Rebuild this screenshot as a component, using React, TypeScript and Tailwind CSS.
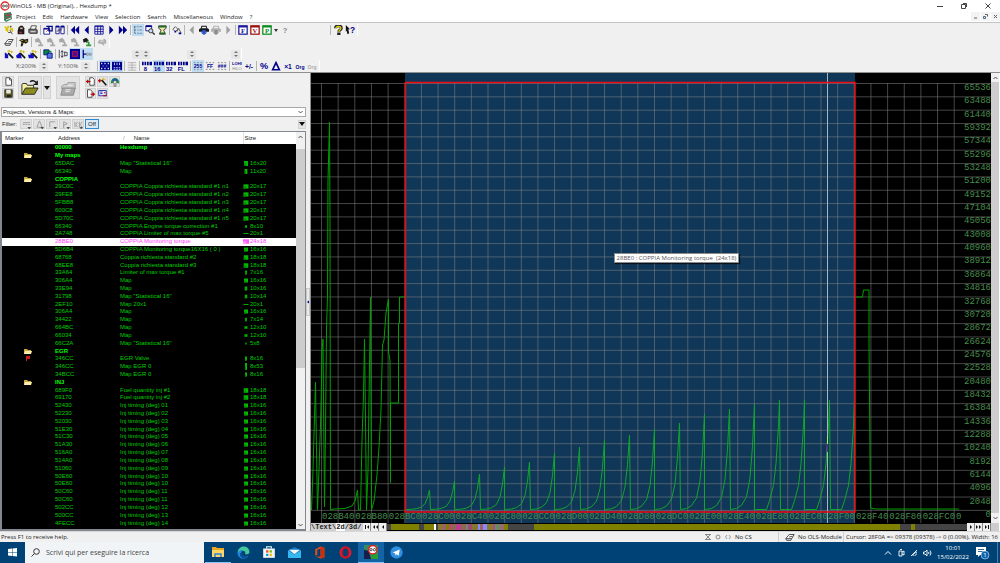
import { useState } from 'react';
import type { ReactNode } from 'react';
import clsx from 'clsx';

const NAVY = '#00008b';

const menus = ['Project', 'Edit', 'Hardware', 'View', 'Selection', 'Search', 'Miscellaneous', 'Window', '?'];

interface MapRow {
  address?: string;
  name: string;
  size?: string;
  kind?: 'folder' | 'root' | 'flag' | 'selected';
}

const rows: MapRow[] = [
  { address: '00000', name: 'Hexdump', kind: 'root' },
  { name: 'My maps', kind: 'folder' },
  { address: '65DAC', name: 'Map "Statistical 16"', size: '16x20' },
  { address: '66340', name: 'Map', size: '11x20' },
  { name: 'COPPIA', kind: 'folder' },
  { address: '29C0C', name: 'COPPIA Coppia richiesta standard #1 n1', size: '20x17' },
  { address: '29FE8', name: 'COPPIA Coppia richiesta standard #1 n2', size: '20x17' },
  { address: '5FBB8', name: 'COPPIA Coppia richiesta standard #1 n3', size: '20x17' },
  { address: '600C8', name: 'COPPIA Coppia richiesta standard #1 n4', size: '20x17' },
  { address: '5D70C', name: 'COPPIA Coppia richiesta standard #1 n5', size: '20x17' },
  { address: '66340', name: 'COPPIA Engine torque correction #1', size: '8x10' },
  { address: '2A748', name: 'COPPIA Limiter of max torque #5', size: '20x1' },
  { address: '28BE0', name: 'COPPIA Monitoring torque', size: '24x18', kind: 'selected' },
  { address: '5D6B4', name: 'COPPIA Monitoring torque16X16 ( 0 )', size: '16x16' },
  { address: '68768', name: 'Coppia richiesta standard #2', size: '18x18' },
  { address: '68EE8', name: 'Coppia richiesta standard #3', size: '18x18' },
  { address: '33A64', name: 'Limiter of max torque #1', size: '7x16' },
  { address: '306A4', name: 'Map', size: '16x16' },
  { address: '33E94', name: 'Map', size: '10x16' },
  { address: '31798', name: 'Map "Statistical 16"', size: '10x14' },
  { address: '2EF10', name: 'Map 20x1', size: '20x1' },
  { address: '306A4', name: 'Map', size: '16x16' },
  { address: '34422', name: 'Map', size: '7x14' },
  { address: '664BC', name: 'Map', size: '12x10' },
  { address: '66034', name: 'Map', size: '12x10' },
  { address: '66C2A', name: 'Map "Statistical 16"', size: '5x8' },
  { name: 'EGR', kind: 'folder' },
  { address: '346CC', name: 'EGR Valve', size: '8x16', kind: 'flag' },
  { address: '346CC', name: 'Map EGR 0', size: '8x53' },
  { address: '34BCC', name: 'Map EGR 0', size: '8x16' },
  { name: 'INJ', kind: 'folder' },
  { address: '689F0', name: 'Fuel quantity inj #1', size: '18x18' },
  { address: '69170', name: 'Fuel quantity inj #2', size: '18x18' },
  { address: '52430', name: 'Inj timing (deg) 01', size: '16x16' },
  { address: '52230', name: 'Inj timing (deg) 02', size: '16x16' },
  { address: '52030', name: 'Inj timing (deg) 03', size: '16x16' },
  { address: '51E30', name: 'Inj timing (deg) 04', size: '16x16' },
  { address: '51C30', name: 'Inj timing (deg) 05', size: '16x16' },
  { address: '51A30', name: 'Inj timing (deg) 06', size: '16x16' },
  { address: '516A0', name: 'Inj timing (deg) 07', size: '16x16' },
  { address: '514A0', name: 'Inj timing (deg) 08', size: '16x16' },
  { address: '51060', name: 'Inj timing (deg) 09', size: '16x16' },
  { address: '50E60', name: 'Inj timing (deg) 10', size: '16x16' },
  { address: '50E60', name: 'Inj timing (deg) 10', size: '16x16' },
  { address: '50C60', name: 'Inj timing (deg) 11', size: '16x16' },
  { address: '50C60', name: 'Inj timing (deg) 11', size: '16x16' },
  { address: '502CC', name: 'Inj timing (deg) 12', size: '16x16' },
  { address: '500CC', name: 'Inj timing (deg) 13', size: '16x16' },
  { address: '4FECC', name: 'Inj timing (deg) 14', size: '16x16' },
];

/* ---------- icons ---------- */

function Svg({ children, size = 10, box = 12 }: { children: ReactNode; size?: number; box?: number }) {
  return (
    <svg width={size} height={size} viewBox={`0 0 ${box} ${box}`} fill="none" aria-hidden="true" className="shrink-0">
      {children}
    </svg>
  );
}

function Glyph({ text, color = NAVY, size = 6 }: { text: string; color?: string; size?: number }) {
  return (
    <Svg>
      <text x="6" y="9" textAnchor="middle" fontSize={size} fontWeight="bold" fontFamily="Liberation Sans, sans-serif" fill={color}>
        {text}
      </text>
    </Svg>
  );
}

function Arrow({ dir, double, color = NAVY }: { dir: 'left' | 'right'; double?: boolean; color?: string }) {
  return (
    <Svg>
      <g fill={color} transform={dir === 'right' ? 'matrix(-1 0 0 1 12 0)' : undefined}>
        {double ? <path d="M1 6l5-5v10zM6 6l5-5v10z" /> : <path d="M3 6l5-5v10z" />}
      </g>
    </Svg>
  );
}

function Car({ color, wheel }: { color: string; wheel: string }) {
  return (
    <Svg>
      <path d="M0 8V5l2-1 1-3h6l1 3 2 1v3H0z" fill={color} />
      <path d="M4 2h4l1 2H3z" fill="#f0f0f0" />
      <path d="M4 6h4v3h2l-4 3-4-3h2z" fill={wheel} />
    </Svg>
  );
}

function LetterBox({ letter, color }: { letter: string; color: string }) {
  return (
    <Svg>
      <rect x="1" y="1" width="10" height="10" fill="#fff" stroke={color} strokeWidth="1.500" />
      <path d="M1 2h10" stroke={color} strokeWidth="2" />
      <text x="6" y="10" textAnchor="middle" fontSize="8" fontWeight="bold" fontFamily="Liberation Serif, serif" fill={color}>
        {letter}
      </text>
    </Svg>
  );
}

function Wand({ mark }: { mark: string }) {
  return (
    <Svg>
      <path d={mark} fill="#1010c0" />
      <path d="M5 5l6 6" stroke="#111" strokeWidth="2" />
      <path d="M6 1v3M4 2.500h4M9 2v3M8 3.500h3" stroke="#c9b400" />
    </Svg>
  );
}

function Hammer({ color, dark }: { color: string; dark?: string }) {
  return (
    <Svg>
      <path d="M1 3l4-2 3 3-2 3-2-1-2 1z" fill={color} />
      <path d="M6 5l3 3M5 10h6M8 7v4" stroke={dark ?? color} strokeWidth="2" />
    </Svg>
  );
}

function Bars({ lower }: { lower: string }) {
  return (
    <Svg>
      <path d="M0 1h2v4H0zM3 1h2v4H3zM6 1h2v4H6zM9 1h3v4H9z" fill={NAVY} />
      <text x="4" y="12" textAnchor="middle" fontSize="7" fontWeight="bold" fontFamily="Liberation Sans, sans-serif" fill={NAVY}>
        {lower}
      </text>
    </Svg>
  );
}

function BitGrid({ text, color = NAVY }: { text: string; color?: string }) {
  return (
    <Svg>
      <path d="M1 2h2M5 2h2M9 2h2M1 10h2M5 10h2M9 10h2" stroke="#777" />
      <text x="6" y="8" textAnchor="middle" fontSize="6" fontWeight="bold" fontFamily="Liberation Sans, sans-serif" fill={color}>
        {text}
      </text>
    </Svg>
  );
}

const icons = {
  wizard: (
    <Svg>
      <path d="M1 2l4 4M2 5l3 3M5 1v3M7 5h3v3" stroke="#d8c400" strokeWidth="2" />
      <path d="M7 6l3 5M5 9h3" stroke="#333" />
      <path d="M7 1h2v2H7z" fill="#555" />
    </Svg>
  ),
  bag: (
    <Svg>
      <path d="M2 11V7l1-4 2-2h3l2 3v7z" fill="#1b1b1b" />
      <path d="M5 3h3v2H5z" fill="#e7b8a0" />
      <path d="M4 8h3v2H4z" fill="#a33" />
    </Svg>
  ),
  printer: (
    <Svg>
      <path d="M3 5l1-4h6L9 5" fill="#fff" stroke="#333" />
      <path d="M1 5h9l1 1v4H2L1 9z" fill="#777" stroke="#222" />
      <path d="M3 8h6" stroke="#eee" />
    </Svg>
  ),
  windowOpen: (
    <Svg>
      <path d="M1 4h7v7H1z" fill="#fff" stroke={NAVY} />
      <path d="M1 4.500h7M4 1.500h7M7 1v6h4V1" stroke={NAVY} strokeWidth="1.500" />
      <path d="M4 8l2-2" stroke="#b22" />
    </Svg>
  ),
  windows: (
    <Svg>
      <path d="M1 1.500h4v9H1zM7 1.500h4v9H7z" fill="#fff" stroke={NAVY} />
      <path d="M1 2h4M7 2h4" stroke={NAVY} strokeWidth="2" />
      <path d="M2 8l7-4M3 6h5" stroke="#446" />
    </Svg>
  ),
  table: (
    <Svg>
      <path d="M1 1h10v10H1z" fill="#fff" stroke={NAVY} />
      <path d="M1 2h10M1 5h10M1 8h10M4.500 1v10M8 1v10" stroke={NAVY} />
    </Svg>
  ),
  tree: (
    <Svg>
      <path d="M1 2h3M2 2v8M2 6h2M2 10h2M8 2h3M8 6h3M8 10h3" stroke="#556" strokeDasharray="1.500 .5" />
      <path d="M5 1h2v2H5zM5 5h2v2H5zM5 9h2v2H5z" fill="#8ab" />
    </Svg>
  ),
  lens: (
    <Svg>
      <path d="M1 1h7v6H1z" fill="#fff" stroke={NAVY} />
      <path d="M1 1.500h7" stroke={NAVY} strokeWidth="2" />
      <circle cx="7" cy="7" r="2.500" fill="#cde" stroke="#222" />
      <path d="M9 9l2.500 2.500" stroke="#222" strokeWidth="1.500" />
    </Svg>
  ),
  hourglass: (
    <Svg>
      <path d="M2 1h9v3L8 6l2 5H3l2-5-3-2z" fill="#eee6a0" stroke="#333" />
      <path d="M2 2h9M3 10h7" stroke="#1a6b2a" strokeWidth="2" />
    </Svg>
  ),
  nodes: (
    <Svg>
      <path d="M1 5l3-3 3 3-3 3zM6 8l2-4 3 6" stroke="#444" />
      <path d="M8 9h3v2H8zM3 7h2v2H3z" fill={NAVY} />
    </Svg>
  ),
  help: <Glyph text="?" color="#888" size={9} />,
  helpYellow: (
    <Svg>
      <path d="M3 4c0-4 7-4 7 0 0 2-3 2-3 4" stroke="#222" strokeWidth="3.500" />
      <path d="M3.500 4c0-3 6-3 6 0 0 2-2.500 2-2.500 4" stroke="#e6d800" strokeWidth="1.500" />
      <path d="M5 9h4v3H5z" fill="#222" />
    </Svg>
  ),
  helpArrow: (
    <Svg>
      <path d="M1 0l5 5H4l1 5-2 1-1-4-1 1z" fill="#111" />
      <text x="9" y="9" textAnchor="middle" fontSize="10" fontWeight="bold" fontFamily="Liberation Sans, sans-serif" fill={NAVY}>
        ?
      </text>
    </Svg>
  ),
  eraser: (
    <Svg>
      <path d="M1 8l4-5h6L8 8z" fill="#fff" stroke="#333" />
      <path d="M1 8l1 2h5l1-2M5 6l4-1" stroke="#333" />
    </Svg>
  ),
  plug: (
    <Svg>
      <path d="M0 4l4-2 3 1 4-1v4L8 8 6 7l-2 4H2l1-5z" fill="#1b1b1b" />
      <path d="M2 4h3M7 5h3M4 7l2 1" stroke="#d4c620" />
    </Svg>
  ),
  speaker: (
    <Svg>
      <path d="M1 6l2-3 3 1 3-2 2 2v4H8l1 3-4-3H2z" fill="#b0b0b0" />
      <path d="M4 5h4" stroke="#eee" />
    </Svg>
  ),
  swap: (
    <Svg>
      <path d="M1 1h6v6H1z" fill="#0a8a3a" stroke={NAVY} />
      <path d="M5 5h6v6H5z" fill="#5577dd" stroke={NAVY} />
      <path d="M7 2l3 2" stroke="#0a8a3a" strokeWidth="2" />
    </Svg>
  ),
  updown: (
    <Svg>
      <path d="M1.500 1v10M5 2v8M3.500 4L5 2l1.500 2M3.500 8L5 10l1.500-2M8 3v6M8 8h3M8 4h3M11 4v4" stroke="#334" />
    </Svg>
  ),
  square: (
    <Svg>
      <path d="M1 1h10v10H1z" fill="#2020c0" stroke={NAVY} strokeWidth="2" />
      <path d="M3 3h6v6H3z" fill="#5a0a90" stroke="#b0143c" />
    </Svg>
  ),
  ruler: (
    <Svg>
      <path d="M1.500 1v10M2 6h3" stroke={NAVY} strokeWidth="1.500" />
      <path d="M5.500 5h2v2.500h-2zM9 5h2v2.500H9z" stroke="#889" />
    </Svg>
  ),
  blockA: (
    <Svg>
      <path d="M0 1h12v10H0z" fill={NAVY} />
      <path d="M2 2v2M2 8v2M6 2v2M6 8v2M10 2v2M10 8v2" stroke="#dbe6ff" strokeWidth="1.500" />
      <path d="M3 6h2M7 6h2" stroke="#8fa0e0" />
    </Svg>
  ),
  blockB: (
    <Svg>
      <path d="M0 1h12v10H0z" fill={NAVY} />
      <path d="M3 2v3M6 2v3M9 2v3M2 8h2M5 8h2M8 8h2M2 10h2M5 10h2M8 10h2" stroke="#dbe6ff" />
    </Svg>
  ),
  list: (
    <Svg>
      <path d="M1 2h10M1 5h10M1 8h10M1 11h10M6 2v9" stroke="#aaa" />
    </Svg>
  ),
  lohi: (
    <Svg>
      <text x="6" y="5" textAnchor="middle" fontSize="5" fontWeight="bold" fontFamily="Liberation Sans, sans-serif" fill={NAVY}>LOHI</text>
      <text x="6" y="11" textAnchor="middle" fontSize="5" fontFamily="Liberation Sans, sans-serif" fill="#888">HILO</text>
    </Svg>
  ),
  delta: (
    <Svg>
      <path d="M6 2l4 8.500H2z" stroke={NAVY} strokeWidth="2" />
    </Svg>
  ),
  folderBig: (
    <Svg size={18} box={20}>
      <path d="M1 17V6l1-1h4l1 2h7v3" fill="#f4f2a0" stroke="#222" />
      <path d="M1 17l4-7h14l-4 7z" fill="#8b8b1e" stroke="#222" />
      <path d="M10 3c3-2 6-1 7 2M18 2v4h-4" stroke="#111" strokeWidth="1.500" />
    </Svg>
  ),
  folderGray: (
    <Svg size={18} box={20}>
      <path d="M3 11V8l3-2h3l1-2h8v7" fill="#ccc" stroke="#999" />
      <path d="M2 18l2-8h14l-2 8z" fill="#aaa" stroke="#888" />
      <path d="M7 12h6M7 14h5M10 7h5" stroke="#eee" />
    </Svg>
  ),
  page: (
    <Svg size={9}>
      <path d="M2.500 1h5L10 3.500V11H2.500z" fill="#fff" stroke="#222" />
      <path d="M7.500 1v3H10" stroke="#222" />
    </Svg>
  ),
  disk: (
    <Svg size={9}>
      <path d="M1 1h10v10H1z" fill="#5a5a1e" stroke="#222" />
      <path d="M3 1h6v5H3z" fill="#e9e9e0" />
      <path d="M4 8h5v3H4z" fill="#222" />
    </Svg>
  ),
  pageIn: (
    <Svg size={9}>
      <path d="M5 1h4l2 2v8H5z" fill="#fff" stroke="#222" />
      <path d="M0 6h6M3 4l-2 2 2 2" stroke="#b00" strokeWidth="1.500" />
    </Svg>
  ),
  pageOut: (
    <Svg size={9}>
      <path d="M2 1h4l2 2v8H2z" fill="#fff" stroke="#222" />
      <path d="M6 7h6M9 5l2 2-2 2" stroke="#b00" strokeWidth="1.500" />
    </Svg>
  ),
  wandRed: (
    <Svg size={9}>
      <path d="M0 5h5M3 3L1 5l2 2" stroke="#b00" strokeWidth="1.500" />
      <path d="M5 4l6 7" stroke="#111" strokeWidth="2" />
      <path d="M7 1v4M5 3h5" stroke="#c9b400" />
    </Svg>
  ),
  globe: (
    <Svg>
      <path d="M1 8V5l2-3 3-1 3 1 2 3v3L9 7 6 4 3 7z" fill="#1b9a3c" />
      <path d="M2 4l2-2h4l2 2-2 1H4z" fill="#2456b8" />
      <path d="M6 4l3 3H7v4H5V7H3z" fill="#fff" stroke="#222" strokeWidth=".7" />
    </Svg>
  ),
  mailCard: (
    <Svg size={9}>
      <path d="M1 2h10v7H1z" fill="#dfe6ff" stroke={NAVY} />
      <path d="M3 4h3M3 6h3" stroke={NAVY} />
      <path d="M8 5h2M7 9h5" stroke="#b00" strokeWidth="1.500" />
    </Svg>
  ),
};

/* ---------- small controls ---------- */

function Tool({ label, active, children }: { label: string; active?: boolean; children: ReactNode }) {
  return (
    <button
      type="button"
      aria-label={label}
      aria-pressed={active}
      className={clsx('flex size-3 shrink-0 items-center justify-center', active && 'bg-[#bfdcf3]')}
    >
      {children}
    </button>
  );
}

function Sep() {
  return <span className="mx-px h-[10px] w-px shrink-0 bg-[#b4b4b4]" />;
}

function Spinner({ label }: { label: string }) {
  return (
    <button type="button" aria-label={label} className="flex size-[9px] items-center justify-center bg-[#e6e6e6]">
      <svg width="4" height="6" viewBox="0 0 4 6" fill="#777" aria-hidden="true">
        <path d="M0 2l2-2 2 2zM0 4l2 2 2-2z" />
      </svg>
    </button>
  );
}

function Toolbar({ children, label }: { children: ReactNode; label: string }) {
  return (
    <div role="toolbar" aria-label={label} className="flex h-3 items-center self-start border-r border-white pr-px pl-[3px]">
      {children}
    </div>
  );
}

function Raised({ label, className, children }: { label: string; className: string; children: ReactNode }) {
  return (
    <button
      type="button"
      aria-label={label}
      className={clsx('flex items-center justify-center border border-[#d2d2d2] bg-[#e3e3e3]', className)}
    >
      {children}
    </button>
  );
}

function Caret({ up }: { up?: boolean }) {
  return (
    <svg width="5" height="4" viewBox="0 0 5 4" fill="none" stroke="#555" strokeWidth="1" aria-hidden="true">
      <path d={up ? 'M.5 3l2-2 2 2' : 'M.5 1l2 2 2-2'} />
    </svg>
  );
}

/* ---------- title, menu, toolbars ---------- */

function TitleBar() {
  return (
    <header className="flex h-[11px] items-center bg-white text-[6px] leading-[10px] text-[#222]">
      <svg width="10" height="10" viewBox="0 0 10 10" className="shrink-0" aria-hidden="true">
        <circle cx="5" cy="5" r="4" fill="#fff" stroke="#e02a2a" strokeWidth="1.300" />
        <path d="M2.500 5a1 1 0 102 0 1 1 0 10-2 0M5.500 5a1 1 0 102 0 1 1 0 10-2 0" fill="none" stroke="#333" strokeWidth=".8" />
      </svg>
      <h1 className="flex-1">WinOLS - MB (Original), , Hexdump *</h1>
      <div className="flex">
        <button type="button" aria-label="Minimize" className="flex h-[10px] w-6 items-center justify-center">
          <svg width="6" height="6" viewBox="0 0 6 6" stroke="#444"><path d="M0 3.500h6" /></svg>
        </button>
        <button type="button" aria-label="Restore" className="flex h-[10px] w-6 items-center justify-center">
          <svg width="6" height="6" viewBox="0 0 6 6" fill="none" stroke="#444"><path d="M.5 1.500h4v4h-4zM2 .5h3.500V4" /></svg>
        </button>
        <button type="button" aria-label="Close" className="flex h-[10px] w-6 items-center justify-center">
          <svg width="6" height="6" viewBox="0 0 6 6" stroke="#444"><path d="M.5.5l5 5M5.500.5l-5 5" /></svg>
        </button>
      </div>
    </header>
  );
}

function MenuBar() {
  return (
    <nav className="flex h-3 items-center border-b border-[#c4c4c4] bg-white pl-[3px] text-[6px] leading-[10px] text-[#222]">
      <svg width="10" height="10" viewBox="0 0 10 10" className="mr-[3px] shrink-0" aria-hidden="true">
        <path d="M1 1l7-1 1 7-6 3-2-2z" fill="#2f8a5a" />
        <path d="M2 3l2 1 1-3 1 3 3-2M2 6h6" stroke="#b8324a" fill="none" />
        <path d="M3 8l5-2" stroke="#ddd" />
      </svg>
      <div className="flex flex-1 gap-[7px]">
        {menus.map((menu) => (
          <button key={menu} type="button">{menu}</button>
        ))}
      </div>
      <div className="flex gap-px">
        <button type="button" aria-label="Minimize document" className="flex size-[9px] items-center justify-center bg-[#f3f3f3]">
          <svg width="5" height="5" viewBox="0 0 5 5" stroke="#567"><path d="M1 4h3" /></svg>
        </button>
        <button type="button" aria-label="Restore document" className="flex size-[9px] items-center justify-center bg-[#f3f3f3]">
          <svg width="5" height="5" viewBox="0 0 5 5" fill="none" stroke="#567"><path d="M.5 2.500h2v2h-2zM2 .5h2.500v2" /></svg>
        </button>
        <button type="button" aria-label="Close document" className="flex size-[9px] items-center justify-center bg-[#f3f3f3]">
          <svg width="5" height="5" viewBox="0 0 5 5" stroke="#567"><path d="M1 1l3 3M4 1L1 4" /></svg>
        </button>
      </div>
    </nav>
  );
}

function Toolbars() {
  return (
    <div className="flex flex-col border-b border-[#8f8f8f] bg-[#f0f0f0] pt-px">
      <Toolbar label="Standard">
        <Tool label="Wizard">{icons.wizard}</Tool>
        <Tool label="Customer">{icons.bag}</Tool>
        <Tool label="Print">{icons.printer}</Tool>
        <Sep />
        <Tool label="Open window">{icons.windowOpen}</Tool>
        <Tool label="Tile windows">{icons.windows}</Tool>
        <Sep />
        <Tool label="First"><Arrow dir="left" double /></Tool>
        <Tool label="Previous"><Arrow dir="left" /></Tool>
        <Tool label="Table">{icons.table}</Tool>
        <Tool label="Next"><Arrow dir="right" /></Tool>
        <Tool label="Last"><Arrow dir="right" double /></Tool>
        <Sep />
        <Tool label="Map tree" active>{icons.tree}</Tool>
        <Tool label="Preview">{icons.lens}</Tool>
        <Tool label="Overview">{icons.hourglass}</Tool>
        <Sep />
        <Tool label="Connections">{icons.nodes}</Tool>
        <Sep />
        <Tool label="Previous vehicle"><Arrow dir="left" color="#a0a0a0" /></Tool>
        <Tool label="Vehicle"><Car color="#15151f" wheel="#2a55c8" /></Tool>
        <Tool label="Other vehicle"><Car color="#b0b0b0" wheel="#8c8c8c" /></Tool>
        <Tool label="Next vehicle"><Arrow dir="right" color="#a0a0a0" /></Tool>
        <Sep />
        <Tool label="Factor"><LetterBox letter="F" color="#1a1a9a" /></Tool>
        <Tool label="Value"><LetterBox letter="V" color="#9a1010" /></Tool>
        <Tool label="Potential"><LetterBox letter="P" color="#0a8a1a" /></Tool>
        <button type="button" aria-label="More" className="flex h-3 w-[6px] items-center justify-center">
          <svg width="4" height="3" viewBox="0 0 4 3"><path d="M0 0h4L2 3z" fill="#333" /></svg>
        </button>
        <Tool label="Unknown">{icons.help}</Tool>
        <span className="w-[38px]" />
        <Sep />
        <Tool label="Help">{icons.helpYellow}</Tool>
        <Tool label="Context help">{icons.helpArrow}</Tool>
      </Toolbar>
      <Toolbar label="Edit">
        <Tool label="Erase">{icons.eraser}</Tool>
        <Sep />
        <Tool label="Hardware">{icons.plug}</Tool>
        <Sep />
        <Tool label="Read"><Hammer color="#a8a8a8" /></Tool>
        <Tool label="Write"><Hammer color="#a8a8a8" /></Tool>
        <Tool label="Compare"><Hammer color="#a8a8a8" /></Tool>
        <Tool label="Verify"><Hammer color="#a8a8a8" /></Tool>
        <Tool label="Send"><Hammer color="#1b1b1b" dark="#2d9a3a" /></Tool>
        <Sep />
        <Tool label="Sound">{icons.speaker}</Tool>
      </Toolbar>
      <Toolbar label="Selection">
        <Tool label="Find maps"><Wand mark="M1 11V4l4 3v4z" /></Tool>
        <Tool label="Find axes"><Wand mark="M0 8l5-4 2 7H1z" /></Tool>
        <Tool label="Find blocks"><Wand mark="M0 7h3V4l4 4v3H1z" /></Tool>
        <Sep />
        <Tool label="Swap">{icons.swap}</Tool>
        <Sep />
        <Tool label="Height">{icons.updown}</Tool>
        <Tool label="Selection colour" active>{icons.square}</Tool>
        <Tool label="Ruler" active>{icons.ruler}</Tool>
        <span className="w-[39px]" />
        <Spinner label="Column" />
        <Spinner label="Row" />
        <span className="w-[37px]" />
        <Spinner label="Width" />
        <span className="w-[35px]" />
        <Spinner label="Height" />
      </Toolbar>
      <Toolbar label="View">
        <span className="flex items-center pl-[13px] text-[6px] leading-[10px] text-[#555]">
          <span className="w-[23px]">X:200%</span>
          <Spinner label="Zoom X" />
          <span className="w-[10px]" />
          <span className="w-[23px]">Y:100%</span>
          <Spinner label="Zoom Y" />
        </span>
        <span className="w-[6px]" />
        <Sep />
        <Tool label="Hexdump" active>{icons.blockA}</Tool>
        <Tool label="Bits" active>{icons.blockB}</Tool>
        <Sep />
        <Tool label="List">{icons.list}</Tool>
        <Sep />
        <Tool label="8 bit"><Bars lower="8" /></Tool>
        <Tool label="16 bit" active><Bars lower="16" /></Tool>
        <Tool label="32 bit"><Bars lower="32" /></Tool>
        <Tool label="Float"><Bars lower="FL" /></Tool>
        <Sep />
        <Tool label="Decimal" active><BitGrid text="255" /></Tool>
        <Tool label="Hexadecimal"><BitGrid text="FF" /></Tool>
        <Tool label="Binary"><BitGrid text="###" /></Tool>
        <Sep />
        <Tool label="Byte order">{icons.lohi}</Tool>
        <Tool label="Sign"><Glyph text="+/-" size={8} /></Tool>
        <Sep />
        <Tool label="Percent"><Glyph text="%" size={11} /></Tool>
        <Tool label="Difference">{icons.delta}</Tool>
        <Tool label="Factor one"><Glyph text="×1" size={8} /></Tool>
        <Tool label="Original"><Glyph text="Org" size={6} /></Tool>
        <Tool label="Original grey"><Glyph text="Org" size={6} color="#aaa" /></Tool>
      </Toolbar>
    </div>
  );
}

/* ---------- left panel ---------- */

function SizeIcon({ size, pink }: { size: string; pink: boolean }) {
  const [cols, lines] = size.split('x').map(Number);
  const w = cols / 4;
  const h = Math.min(Math.max(lines / 4, 1), 7);
  return (
    <svg width="6" height="7" viewBox="0 0 6 7" className="shrink-0" aria-hidden="true">
      <rect x={3 - w / 2} y={3.5 - h / 2} width={w} height={h} fill={pink ? '#ff5cff' : '#00b800'} />
      <rect x={3 - w / 2} y={3.5} width={w / 2} height={h / 2} fill={pink ? '#ffa0ff' : '#008a00'} />
    </svg>
  );
}

function MarkerIcon({ kind }: { kind?: MapRow['kind'] }) {
  if (kind === 'folder') {
    return (
      <svg width="8" height="7" viewBox="0 0 8 7" className="mx-auto" aria-hidden="true">
        <path d="M0 1h3l1 1h3v4H0z" fill="#c9a93c" />
        <path d="M1 3h7L7 6H0z" fill="#ffeeaa" />
      </svg>
    );
  }
  if (kind === 'flag') {
    return (
      <svg width="8" height="7" viewBox="0 0 8 7" className="mx-auto" aria-hidden="true">
        <path d="M2 1h4v3H3v2H2z" fill="#d01818" />
      </svg>
    );
  }
  return null;
}

function MapTable() {
  return (
    <div className="flex min-h-0 flex-1 border border-b-2 border-l-2 border-[#828790]">
      <div className="min-w-0 flex-1 overflow-hidden bg-black">
        <table className="h-[395px] w-full table-fixed border-collapse text-left font-['Liberation_Sans',sans-serif] text-[6px] leading-[7px] whitespace-nowrap">
          <thead className="bg-white text-[#222]">
            <tr className="h-3">
              <th className="w-[52px] pl-[3px] font-normal">Marker</th>
              <th className="w-[65px] pl-1 font-normal">Address</th>
              <th className="pl-1 font-normal"><span className="mr-[9px] text-[#999]">/</span>Name</th>
              <th className="w-[53px] border-l border-[#e2e2e2] pl-px font-normal">Size</th>
            </tr>
          </thead>
          <tbody>
            {rows.map((row, i) => {
              const selected = row.kind === 'selected';
              const strong = row.kind === 'folder' || row.kind === 'root';
              return (
                <tr
                  key={i}
                  className={clsx(
                    selected ? 'bg-white text-[#ff3cff]' : strong ? 'font-bold text-[#00ff00]' : 'text-[#00cc00]',
                  )}
                >
                  <td className="p-0"><MarkerIcon kind={row.kind} /></td>
                  <td className="p-0 pl-px">{row.kind === 'folder' ? row.name : row.address}</td>
                  <td className="p-0 pl-px">{row.kind === 'folder' ? '' : row.name}</td>
                  <td className="p-0">
                    {row.size && (
                      <span className="flex items-center gap-px">
                        <SizeIcon size={row.size} pink={selected} />
                        {row.size}
                      </span>
                    )}
                  </td>
                </tr>
              );
            })}
          </tbody>
        </table>
      </div>
      <div className="flex w-[9px] flex-col items-center bg-[#f0f0f0]">
        <button type="button" aria-label="Scroll up" className="flex h-[17px] w-full justify-center pt-[3px]"><Caret up /></button>
        <div className="w-full grow-[219] bg-[#cdcdcd]" />
        <div className="w-full grow-[152]" />
        <button type="button" aria-label="Scroll down" className="flex h-[9px] w-full items-center justify-center"><Caret /></button>
      </div>
    </div>
  );
}

function FilterRow() {
  const [on, setOn] = useState(false);
  const filters = [
    { label: 'Text filter', d: 'M1 5h2M4 5h2M7 5h2M1 3h8' },
    { label: 'Difference filter', d: 'M5 1l3 7H2z' },
    { label: 'Range filter', d: 'M2 8V2h6' },
    { label: 'Flag filter', d: 'M3 9V2l4 2-4 2' },
    { label: 'Name filter', d: 'M1 2v6M4 2L2 5l2 3M6 2v6M9 2L7 5l2 3' },
  ];
  return (
    <div className="flex h-[14px] items-center gap-px text-[6px] leading-[10px] text-[#222]">
      <span className="w-[19px] pl-[2px] font-['Liberation_Sans',sans-serif]">Filter:</span>
      {filters.map((f) => (
        <Raised key={f.label} label={f.label} className="h-[10px] w-3">
          <svg width="9" height="9" viewBox="0 0 10 10" fill="none" stroke="#999" aria-hidden="true">
            <path d={f.d} />
            <path d="M6 8h4L8 10z" fill="#222" stroke="none" />
          </svg>
        </Raised>
      ))}
      <button
        type="button"
        onClick={() => setOn(!on)}
        className="h-[10px] w-[14px] border border-[#2a8ad4] bg-[#dbe9f5] text-center font-['Liberation_Sans',sans-serif] text-[6px] leading-[8px]"
      >
        {on ? 'On' : 'Off'}
      </button>
      <Raised label="Filter options" className="ml-auto h-[9px] w-2">
        <svg width="6" height="4" viewBox="0 0 6 4"><path d="M0 0h6L3 4z" fill="#111" /></svg>
      </Raised>
    </div>
  );
}

function LeftPanel() {
  return (
    <aside className="flex w-[306px] shrink-0 flex-col">
      <div className="flex h-[34px] items-start gap-px pt-[3px] pl-[2px]">
        <div className="mr-[3px] flex flex-col gap-px">
          <Raised label="New project" className="h-[11px] w-3">{icons.page}</Raised>
          <Raised label="Save project" className="h-[11px] w-3">{icons.disk}</Raised>
        </div>
        <Raised label="Open project" className="h-[23px] w-6">{icons.folderBig}</Raised>
        <Raised label="Recent projects" className="h-[23px] w-2">
          <svg width="6" height="4" viewBox="0 0 6 4"><path d="M0 0h6L3 4z" fill="#111" /></svg>
        </Raised>
        <Raised label="Close project" className="mx-1 h-[23px] w-6">{icons.folderGray}</Raised>
        <div className="grid grid-cols-3 gap-px">
          <Raised label="Import file" className="h-[11px] w-[11px]">{icons.pageIn}</Raised>
          <Raised label="Import wizard" className="h-[11px] w-[11px]">{icons.wandRed}</Raised>
          <Raised label="Online" className="h-[11px] w-[11px]">{icons.globe}</Raised>
          <Raised label="Export file" className="h-[11px] w-[11px]">{icons.pageOut}</Raised>
          <Raised label="Export mail" className="h-[11px] w-[11px]">{icons.mailCard}</Raised>
        </div>
      </div>
      <div className="relative ml-px flex">
        <select
          aria-label="Project view"
          className="h-[10px] flex-1 appearance-none border border-[#a8a8a8] bg-white pl-px font-['Liberation_Sans',sans-serif] text-[6px] leading-[8px] text-[#222]"
        >
          <option>Projects, Versions &amp; Maps:</option>
        </select>
        <span className="pointer-events-none absolute inset-y-0 right-[3px] flex items-center"><Caret /></span>
      </div>
      <FilterRow />
      <MapTable />
    </aside>
  );
}

/* ---------- 2d view ---------- */

const LEFT = 311;
const TOP = 73;
const WIDTH = 680;
const HEIGHT = 450;
const BASE = 510;

const vLines = Array.from({ length: 39 }, (_, i) => 321.5 + i * 16.65);
const hLines = Array.from({ length: 33 }, (_, i) => 83.5 + i * 13.34);
const yLabels = Array.from({ length: 33 }, (_, i) => 65536 - i * 2048);
const xLabels = Array.from({ length: 19 }, (_, i) => (0x28b40 + i * 0x40).toString(16).toUpperCase().padStart(6, '0'));

const leadIn =
  '311.5,510 313,470 315.500,382 316.500,450 317.500,510 319,470 320.500,425 321.500,382 322,350 323,339 323.500,400 324.500,507 325.500,430 326.500,330 327.500,295 328,180 329.500,122 330,220 330.500,510 334,509 345,508.500 352,506 355,501 357.500,490 358.500,510 360.500,510 362,440 363.500,395 364.500,339 365.500,420 366.500,510 368,470 369,400 370.500,297 371,400 371.500,510 374,501 377,475 379,447 381,410 382.500,345 384,340 386,313 388.500,299 388.500,352 390,360 390.500,483 390.500,403 398.500,403 398.500,323 399.500,323 399.500,297 405,297';

const leadOut = '855,297 862.500,297 863.500,290 869,290 869,343 870,452 870.500,508 876,509 959,509';

// top of each row of the selected map, from left to right
const peaks = [490, 481, 474, 467, 462, 453, 447, 440, 435, 429, 423, 414, 409, 404, 400, 400, 400, 400];

const slow = [[-24, 0], [-18, 0.01], [-13, 0.04], [-8, 0.12], [-4.5, 0.3], [-2, 0.6], [0, 1]];
const steep = [[-24, 0], [-13, 0], [-10, 0.08], [-6, 0.22], [-3.5, 0.42], [-1, 0.76], [0, 1]];

const selectionPoints = peaks
  .map((top, i) => {
    const x = 429.5 + i * 25;
    const shape = i > 13 ? steep : slow;
    const points = shape.map(([dx, k]) => `${x + dx},${BASE - 0.5 - (BASE - 0.5 - top) * k}`);
    points.push(`${i % 2 === 0 ? x + 1 : x},${BASE - 0.5}`);
    return points.join(' ');
  })
  .join(' ');

function Plot() {
  return (
    <div className="relative min-h-0 flex-1 overflow-hidden bg-black">
      <svg
        viewBox={`${LEFT} ${TOP} ${WIDTH} ${HEIGHT}`}
        preserveAspectRatio="none"
        className="absolute inset-0 size-full"
        role="img"
        aria-label="2d view"
      >
        <rect x="405" y={TOP} width="450" height={HEIGHT} fill="#103757" />
        <g stroke="#8a8a8a" strokeOpacity=".5" strokeWidth="1">
          {vLines.map((x) => <line key={x} x1={x} x2={x} y1="83" y2={TOP + HEIGHT} />)}
          {hLines.map((y) => <line key={y} x1={LEFT} x2={LEFT + WIDTH} y1={y} y2={y} />)}
        </g>
        <g fill="none" stroke="#00a000" strokeWidth="1">
          <polyline points={leadIn} />
          <polyline points={leadOut} />
          <polyline points={`405,509.5 ${selectionPoints}`} stroke="#10a52c" />
        </g>
        <path d={`M827.500 ${TOP}V${TOP + HEIGHT}`} stroke="#a9b4bc" />
        <path d="M827.500 444v8" stroke="#8a10b0" />
        <path d="M827.500 436v8" stroke="#a0f080" />
        <rect x="405.5" y="82.5" width="449.500" height="429.500" fill="none" stroke="#ee0a14" strokeWidth="1.500" />
      </svg>
      <div className="absolute top-[11px] right-0 bottom-[3px] flex flex-col justify-between text-right font-['Liberation_Mono',monospace] text-[9px] leading-[9px] text-[#468c4b]">
        {yLabels.map((v) => <span key={v}>{v}</span>)}
      </div>
      <div className="absolute inset-x-0 bottom-px flex pl-[11px] font-['Liberation_Mono',monospace] text-[9px] leading-[9px] text-[#468c4b]">
        <div className="grid flex-1 grid-cols-19">
          {xLabels.map((v) => <span key={v}>{v}</span>)}
        </div>
        <span className="w-[35px]">0</span>
      </div>
      <div
        role="tooltip"
        className="absolute top-[40%] left-[44.5%] border border-[#8a8a8a] bg-white px-[2px] text-[6px] leading-[8px] whitespace-pre text-[#555] shadow-[1px_1px_1px_#000a]"
      >
        {'28BE0 : COPPIA Monitoring torque  (24x18)'}
      </div>
    </div>
  );
}

// colour, share of the strip
const stripe: [string, number][] = [
  ['#444444', 4], ['#808000', 28], ['#444444', 5], ['#808000', 10], ['#ffffff', 2], ['#444444', 2],
  ['#8a7a30', 5], ['#a05a78', 3], ['#808000', 3], ['#b05060', 4], ['#807050', 3], ['#c03a90', 5],
  ['#8a6a50', 5], ['#808080', 2], ['#a04a70', 4], ['#807830', 6], ['#8888ff', 2], ['#a06060', 3],
  ['#8888ff', 4], ['#8a7a30', 6], ['#b04a90', 2], ['#6a8a60', 5], ['#9a6a70', 4], ['#808000', 4],
  ['#444444', 26], ['#808000', 366], ['#444444', 11], ['#808000', 4], ['#444444', 52],
];

function NavButton({ label, d }: { label: string; d: string }) {
  return (
    <button type="button" aria-label={label} className="flex w-2 shrink-0 items-center justify-center border-r border-[#888] bg-[#f0f0f0]">
      <svg width="6" height="6" viewBox="0 0 6 6" fill="#111" aria-hidden="true"><path d={d} /></svg>
    </button>
  );
}

function ViewTabs() {
  return (
    <div className="flex h-2 shrink-0 bg-black">
      <div role="tablist" className="flex w-[52px] items-center bg-[#d0d0d0] font-['Liberation_Mono',monospace] text-[7px] leading-[8px] font-bold text-[#222]">
        <button type="button" role="tab" aria-selected="false">\Text\</button>
        <button type="button" role="tab" aria-selected="true" className="bg-white">2d</button>
        <button type="button" role="tab" aria-selected="false">/3d/</button>
      </div>
      <NavButton label="First" d="M1 1h1v4H1zM5 1v4L3 3z" />
      <NavButton label="Fast back" d="M3 1v4L1 3zM6 1v4L4 3z" />
      <NavButton label="Back" d="M4 1v4L2 3z" />
      <div className="flex flex-1 py-px">
        {stripe.map(([color, share], i) => (
          <span key={i} style={{ flexGrow: share, backgroundColor: color }} />
        ))}
      </div>
      <NavButton label="Forward" d="M2 1v4l2-2z" />
      <NavButton label="Fast forward" d="M0 1v4l2-2zM3 1v4l2-2z" />
      <NavButton label="Last" d="M4 1h1v4H4zM1 1v4l2-2z" />
    </div>
  );
}

function View2d() {
  return (
    <section className="flex min-w-0 flex-1">
      <div className="flex min-w-0 flex-1 flex-col">
        <Plot />
        <ViewTabs />
      </div>
      <div className="flex w-[9px] flex-col border-r border-white bg-[#f0f0f0]">
        <button type="button" aria-label="Scroll up" className="flex h-[9px] items-center justify-center"><Caret up /></button>
        <div className="flex-1 bg-[#cdcdcd]" />
        <button type="button" aria-label="Scroll down" className="flex h-[10px] items-center justify-center"><Caret /></button>
        <div className="h-2 bg-[#cdcdcd]" />
      </div>
    </section>
  );
}

/* ---------- status bar and taskbar ---------- */

function StatusBar() {
  return (
    <footer className="flex h-[11px] shrink-0 items-center border-t border-[#d8d8d8] bg-[#f0f0f0] pr-[2px] text-[6px] leading-[10px] text-[#222]">
      <span className="flex-1 pl-px">Press F1 to receive help.</span>
      <span className="flex w-[73px] items-center gap-1">
        <svg width="6" height="6" viewBox="0 0 6 6" fill="none" stroke="#888"><path d="M0 .5h6M0 5.500h6M1 1l4 4M5 1L1 5" /></svg>
        <svg width="6" height="6" viewBox="0 0 6 6" fill="none" stroke="#888"><circle cx="3" cy="3" r="2" /></svg>
        <svg width="6" height="6" viewBox="0 0 6 6" fill="none" stroke="#999"><path d="M2 1L.5 3 2 5M4 1l1.500 2L4 5" /></svg>
        No CS
      </span>
      <span className="flex w-[65px] items-center gap-[3px] border-l border-[#d0d0d0] pl-[6px]">
        {icons.eraser}
        <span className="whitespace-nowrap">No OLS-Module</span>
      </span>
      <span className="border-l border-[#d0d0d0] pl-[2px] whitespace-nowrap">
        {'Cursor: 28F0A => 09378 (09378) -> 0 (0.00%), Width: 16'}
      </span>
    </footer>
  );
}

const apps: { name: string; open?: boolean; active?: boolean; icon: ReactNode }[] = [
  {
    name: 'File Explorer',
    open: true,
    icon: (
      <Svg size={12}>
        <path d="M0 1h4l1 1h7v9H0z" fill="#e8a820" />
        <path d="M0 4h12v7H0z" fill="#ffd766" />
        <path d="M3 11V8h6v3" stroke="#2d84d0" strokeWidth="1.500" />
      </Svg>
    ),
  },
  {
    name: 'Edge',
    icon: (
      <Svg size={13}>
        <path d="M.5 6C1 2 4 .4 6.500.5c3 .2 5 2.500 5 5 0 2-2 2.500-4 2 .8-2-.7-3.300-2.700-3C2.500 5 1 6 .5 6z" fill="#42c99a" />
        <path d="M.5 6c1-2 3-2.700 4.800-2.300C3.500 5 3.300 7.500 5 9c1.500 1.300 4 1.200 5.800 0C9 12 5 12.500 2.500 10.500 1 9.300.4 7.500.5 6z" fill="#1f8be0" />
        <path d="M4 6c-.5 3 2 5 6.500 3.500-2 2.500-5.500 2.500-7 .5C2 8.300 2.500 6.800 4 6z" fill="#0b4c9b" />
      </Svg>
    ),
  },
  {
    name: 'Microsoft Store',
    icon: (
      <Svg size={14}>
        <path d="M4 3V1.500h4V3" stroke="#dff" />
        <path d="M1 3h10v8H1z" fill="#f5f5f5" />
        <path d="M3.500 4.500h2v2h-2z" fill="#f25022" />
        <path d="M6.500 4.500h2v2h-2z" fill="#7fba00" />
        <path d="M3.500 7.500h2v2h-2z" fill="#00a4ef" />
        <path d="M6.500 7.500h2v2h-2z" fill="#ffb900" />
      </Svg>
    ),
  },
  {
    name: 'Mail',
    icon: (
      <Svg size={13}>
        <path d="M0 4l6-3 6 3v7H0z" fill="#0f78c8" />
        <path d="M1 3.500h10L6 7.500z" fill="#f4f4f4" />
        <path d="M0 4l6 4 6-4v7H0z" fill="#35b8f0" />
      </Svg>
    ),
  },
  {
    name: 'Office',
    icon: (
      <Svg size={13}>
        <path d="M2 3l5-2.500L10.500 1.500v9L7 11.500 2 9.500l5 .5V2.500L4 3.500V8L2 9z" fill="#e64a19" />
        <path d="M7 .5l3.500 1v9L7 11.500z" fill="#c8300e" />
      </Svg>
    ),
  },
  {
    name: 'Opera',
    icon: (
      <Svg size={13}>
        <ellipse cx="6" cy="6" rx="4.500" ry="4.700" stroke="#e8182c" strokeWidth="2" />
        <ellipse cx="6" cy="6" rx="2.600" ry="4.500" stroke="#c01020" />
      </Svg>
    ),
  },
  {
    name: 'WinOLS',
    open: true,
    active: true,
    icon: (
      <Svg size={14}>
        <path d="M0 0h12v12H0z" fill="#3a8a60" />
        <path d="M0 4l4 1 2 7H0z" fill="#16204a" />
        <path d="M7 9l5-2v5H6z" fill="#28a030" />
        <circle cx="7.500" cy="4" r="3.600" fill="#fff" stroke="#e02020" strokeWidth="1.200" />
        <path d="M5 4a1 1 0 102 0 1 1 0 10-2 0M8 4a1 1 0 102 0 1 1 0 10-2 0" stroke="#222" strokeWidth=".7" />
      </Svg>
    ),
  },
  {
    name: 'Telegram',
    icon: (
      <Svg size={13}>
        <circle cx="6" cy="6" r="5.700" fill="#2f8fe0" />
        <path d="M2.500 6l6.500-2.700L8 9 6 7.700 5 8.700l-.3-2z" fill="#fff" />
      </Svg>
    ),
  },
];

function Taskbar() {
  return (
    <footer className="flex h-[21px] shrink-0 items-stretch bg-[#004275] text-white">
      <button type="button" aria-label="Start" className="flex w-[25px] items-center justify-center">
        <svg width="9" height="9" viewBox="0 0 9 9" fill="#fff"><path d="M0 1l4-.5V4H0zM4.500.5L9 0v4H4.500zM0 4.500h4V8l-4-.5zM4.500 4.500H9v4L4.500 8z" /></svg>
      </button>
      <label className="flex w-[179px] items-center gap-[6px] bg-[#f1f4f7] pl-[6px] text-[#444]">
        <svg width="9" height="9" viewBox="0 0 9 9" fill="none" stroke="#333" aria-hidden="true"><circle cx="5.500" cy="3.500" r="2.800" /><path d="M3.500 5.500L.5 8.500" /></svg>
        <input
          type="text"
          aria-label="Cerca"
          placeholder="Scrivi qui per eseguire la ricerca"
          className="min-w-0 flex-1 text-[7px] leading-[10px] outline-none placeholder:text-[#444]"
        />
      </label>
      <div className="ml-px grid w-[204px] grid-cols-8">
        {apps.map((app) => (
          <button
            key={app.name}
            type="button"
            aria-label={app.name}
            className={clsx(
              'flex items-center justify-center border-b',
              app.active && 'bg-[#1464a5]',
              app.open ? 'border-[#86c5f5]' : 'border-transparent',
            )}
          >
            {app.icon}
          </button>
        ))}
      </div>
      <div className="ml-auto flex items-center">
        <div className="flex items-center gap-[5px]">
          <svg width="8" height="8" viewBox="0 0 8 8" fill="none" stroke="#fff"><path d="M1 5.500l3-3 3 3" /></svg>
          <svg width="8" height="8" viewBox="0 0 8 8" fill="none" stroke="#fff" strokeWidth=".9"><path d="M2 2h3v5H2zM3 .5h2M5 3l2-1v4L5 5" /></svg>
          <svg width="8" height="8" viewBox="0 0 8 8" fill="none" stroke="#fff" strokeWidth=".9"><path d="M1 7L7 1M3 7c0-2 1-3 4-4M5 7c0-1 1-2 2-2" /></svg>
          <svg width="9" height="8" viewBox="0 0 9 8" fill="none" stroke="#fff" strokeWidth=".9"><path d="M.5 3h1.500l2-2v6L2 5H.5zM5.500 3q1 1 0 2M7 1.500q2 2.500 0 5" /></svg>
        </div>
        <div className="w-[42px] text-center text-[6px] leading-[9px]">
          <p>10:01</p>
          <p>15/02/2022</p>
        </div>
        <button type="button" aria-label="Notifications" className="mr-[7px] ml-px flex">
          <svg width="15" height="14" viewBox="0 0 15 14">
            <path d="M1 1h10v8H5l-2 2V9H1z" fill="#fff" />
            <path d="M3 3.500h6M3 5.500h6" stroke="#004275" strokeWidth=".8" />
            <circle cx="10" cy="9" r="4" fill="#0a66b0" stroke="#cfe6fa" strokeWidth=".6" />
            <text x="10" y="11" textAnchor="middle" fontSize="6" fill="#fff">1</text>
          </svg>
        </button>
        <span className="mr-[2px] h-[21px] w-px bg-[#4d7ba0]" />
      </div>
    </footer>
  );
}

export default function App() {
  return (
    <div className="flex h-screen flex-col overflow-hidden bg-[#f0f0f0] font-['Open_Sans','Noto_Sans',sans-serif]">
      <TitleBar />
      <MenuBar />
      <Toolbars />
      <main className="flex min-h-0 flex-1">
        <LeftPanel />
        <div className="flex w-[5px] shrink-0 items-center border-r border-[#8f8f8f]">
          <button type="button" aria-label="Collapse panel" className="flex h-7 w-full items-center border border-[#c8c8c8] bg-[#e8e8e8]">
            <svg width="4" height="6" viewBox="0 0 4 6"><path d="M4 0v6L0 3z" fill={NAVY} /></svg>
          </button>
        </div>
        <View2d />
      </main>
      <StatusBar />
      <Taskbar />
    </div>
  );
}
